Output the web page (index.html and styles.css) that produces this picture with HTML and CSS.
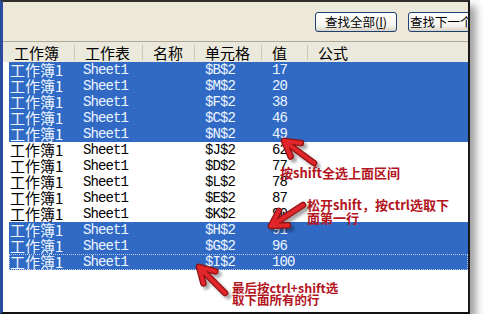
FILE: index.html
```html
<!DOCTYPE html>
<html lang="zh-CN">
<head>
    <meta charset="UTF-8">
    <title>查找和替换</title>
    <link rel="stylesheet" href="styles.css">
</head>
<body>
<div class="window">
    <div class="toolbar">
        <button class="btn" type="button">查找全部(<u>I</u>)</button>
        <button class="btn" type="button">查找下一个(<u>F</u>)</button>
    </div>

    <div class="results">
        <div class="head">
            <div class="hcell first">工作簿</div>
            <div class="hcell">工作表</div>
            <div class="hcell">名称</div>
            <div class="hcell">单元格</div>
            <div class="hcell">值</div>
            <div class="hcell last">公式</div>
        </div>

        <div class="row sel"><span class="book">工作簿1</span><span class="c">Sheet1</span><span></span><span class="c">$B$2</span><span class="c">17</span><span></span></div>
        <div class="row sel"><span class="book">工作簿1</span><span class="c">Sheet1</span><span></span><span class="c">$M$2</span><span class="c">20</span><span></span></div>
        <div class="row sel"><span class="book">工作簿1</span><span class="c">Sheet1</span><span></span><span class="c">$F$2</span><span class="c">38</span><span></span></div>
        <div class="row sel"><span class="book">工作簿1</span><span class="c">Sheet1</span><span></span><span class="c">$C$2</span><span class="c">46</span><span></span></div>
        <div class="row sel"><span class="book">工作簿1</span><span class="c">Sheet1</span><span></span><span class="c">$N$2</span><span class="c">49</span><span></span></div>
        <div class="row"><span class="book">工作簿1</span><span class="c">Sheet1</span><span></span><span class="c">$J$2</span><span class="c">62</span><span></span></div>
        <div class="row"><span class="book">工作簿1</span><span class="c">Sheet1</span><span></span><span class="c">$D$2</span><span class="c">77</span><span></span></div>
        <div class="row"><span class="book">工作簿1</span><span class="c">Sheet1</span><span></span><span class="c">$L$2</span><span class="c">78</span><span></span></div>
        <div class="row"><span class="book">工作簿1</span><span class="c">Sheet1</span><span></span><span class="c">$E$2</span><span class="c">87</span><span></span></div>
        <div class="row"><span class="book">工作簿1</span><span class="c">Sheet1</span><span></span><span class="c">$K$2</span><span class="c">90</span><span></span></div>
        <div class="row sel"><span class="book">工作簿1</span><span class="c">Sheet1</span><span></span><span class="c">$H$2</span><span class="c">91</span><span></span></div>
        <div class="row sel"><span class="book">工作簿1</span><span class="c">Sheet1</span><span></span><span class="c">$G$2</span><span class="c">96</span><span></span></div>
        <div class="row sel focus"><span class="book">工作簿1</span><span class="c">Sheet1</span><span></span><span class="c">$I$2</span><span class="c">100</span><span></span></div>
    </div>

    <!-- annotations drawn over the dialog -->
    <svg class="arrows" width="490" height="335" viewBox="0 0 490 335">
        <defs>
            <filter id="shadow" x="-50%" y="-50%" width="200%" height="200%">
                <feDropShadow dx="3" dy="3" stdDeviation="1.6" flood-color="#000" flood-opacity="0.35"/>
            </filter>
        </defs>
        <g filter="url(#shadow)" fill="none" stroke-linecap="round" stroke-linejoin="round">
            <g stroke="#8e1212" stroke-width="6.5">
                <path d="M314 163 L284 141 M290.7 156.6 L284 141 L300.9 143"/>
                <path d="M303 205 L271 226 M278.8 210.9 L271 226 L288 225.2"/>
                <path d="M225 293 L199 267 M203.4 283.4 L199 267 L215.4 271.4"/>
            </g>
            <g stroke="#e0262a" stroke-width="4">
                <path d="M314 163 L284 141 M290.7 156.6 L284 141 L300.9 143"/>
                <path d="M303 205 L271 226 M278.8 210.9 L271 226 L288 225.2"/>
                <path d="M225 293 L199 267 M203.4 283.4 L199 267 L215.4 271.4"/>
            </g>
        </g>
    </svg>

    <p class="note n1">按shift全选上面区间</p>
    <p class="note n2">松开shift，按ctrl选取下<br>面第一行</p>
    <p class="note n3">最后按ctrl+shift选<br>取下面所有的行</p>
</div>
</body>
</html>
```

FILE: styles.css
```css
body {
    margin: 0;
    background-color: #fff;
    font-family: "Noto Sans CJK SC", sans-serif;
}

.window {
    position: relative;
    width: 465px;
    height: 310px;
    background-color: #fff;
    border-top: 2px solid #2e2e2e;
    border-left: 3px solid #2a4c9e;
    border-right: 2px solid #1a1a1a;
    border-bottom: 2px solid #111;
    box-shadow: 6px 6px 8px rgba(0,0,0,0.38);
}

.toolbar {
    height: 29px;
    padding: 10px 0 0 312px;
    display: flex;
    gap: 11px;
    align-items: flex-start;
    overflow: hidden;
    background-color: #ECE9D8;
    border-bottom: 1px solid #aca899;
}

.btn {
    flex-shrink: 0;
    width: 82px;
    height: 20px;
    padding: 0;
    font-family: "Noto Sans CJK SC", sans-serif;
    font-size: 12.5px;
    line-height: 18px;
    color: #000;
    white-space: nowrap;
    border: 1px solid #1e3f72;
    border-radius: 3px;
    background: linear-gradient(#ffffff, #f4f3ee 70%, #d8d2c4);
}

.btn u {
    text-decoration: underline;
}

.head {
    display: grid;
    grid-template-columns: 72px 68px 52px 67px 46px 1fr;
    align-items: center;
    height: 20px;
    background-color: #EBE9DB;
}

.hcell {
    height: 15px;
    padding-left: 10px;
    font-size: 15px;
    line-height: 15px;
    border-right: 1px solid #cbc7b7;
}
.hcell.first {
    padding-left: 11px;
}
.hcell.last {
    border-right: none;
}

.row {
    display: grid;
    grid-template-columns: 66px 68px 52px 67px 46px 1fr;
    height: 16px;
    margin-left: 6px;
    line-height: 16px;
    color: #000;
    white-space: nowrap;
}

.row.sel {
    background-color: #316AC5;
    color: #eef6ff;
}

.row.focus {
    outline: 1px dotted #bccbee;
    outline-offset: -1px;
}

.book {
    padding-left: 1px;
    font-size: 15px;
}

.c {
    padding-left: 10px;
    font-family: "Liberation Mono", monospace;
    font-size: 14px;
    letter-spacing: -0.9px;
}
.row .c:nth-child(2) {
    padding-left: 8px;
}

.arrows {
    position: absolute;
    left: -3px;
    top: -2px;
    pointer-events: none;
}

.note {
    position: absolute;
    margin: 0;
    color: #b3141d;
    font-size: 13px;
    font-weight: bold;
    line-height: 13px;
    white-space: nowrap;
}
.n1 {
    left: 277px;
    top: 164px;
}
.n2 {
    left: 304px;
    top: 196px;
}
.n3 {
    left: 229px;
    top: 280px;
    font-size: 12.5px;
    line-height: 11.5px;
}
```
